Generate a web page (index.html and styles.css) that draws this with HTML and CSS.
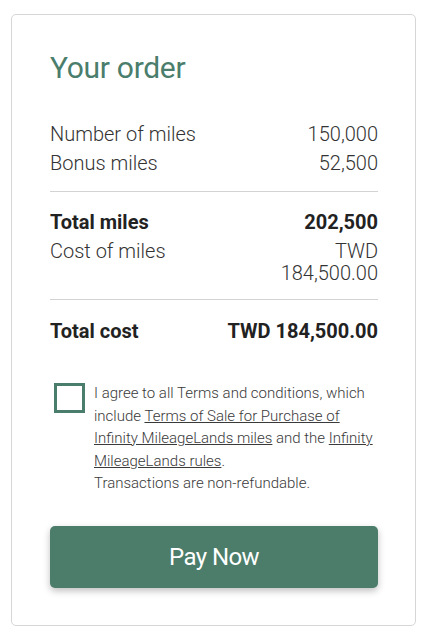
FILE: index.html
```html
<!DOCTYPE html>
<html lang="en">
<head>
    <meta charset="UTF-8">
    <meta name="viewport" content="width=device-width, initial-scale=1.0">
    <title>Your order</title>
    <link rel="stylesheet" href="styles.css">
</head>
<body>
    <div class="card">
        <h1 class="title">Your order</h1>

        <div class="group first">
            <div class="row">
                <span class="label">Number of miles</span>
                <span class="value">150,000</span>
            </div>
            <div class="row">
                <span class="label">Bonus miles</span>
                <span class="value">52,500</span>
            </div>
        </div>

        <div class="group second">
            <div class="row total">
                <span class="label">Total miles</span>
                <span class="value">202,500</span>
            </div>
            <div class="row">
                <span class="label">Cost of miles</span>
                <span class="value narrow">TWD 184,500.00</span>
            </div>
        </div>

        <div class="group last">
            <div class="row total">
                <span class="label">Total cost</span>
                <span class="value">TWD 184,500.00</span>
            </div>
        </div>

        <label class="agree">
            <input type="checkbox" class="check">
            <span class="box"></span>
            <span class="agree-text">
                I agree to all Terms and conditions, which include
                <a href="#">Terms of Sale for Purchase of Infinity MileageLands miles</a>
                and the <a href="#">Infinity MileageLands rules</a>.<br>
                Transactions are non-refundable.
            </span>
        </label>

        <button class="pay">Pay Now</button>
    </div>
</body>
</html>
```

FILE: styles.css
```css
body {
    font-family: Roboto, "Liberation Sans", Arial, sans-serif;
    margin: 0;
    padding: 14px 12px 10px 11px;
    background: #fff;
    color: #333;
}
.card {
    border: 1px solid #d6d6d6;
    border-radius: 5px;
    padding: 33px 37px 37px 38px;
}
.title {
    font-size: 30px;
    font-weight: 400;
    line-height: 40px;
    letter-spacing: -0.3px;
    color: #4a7d6b;
    margin: 0 0 35px;
}
.group {
    border-bottom: 1px solid #d3d3d3;
}
.group.first {
    padding-bottom: 17px;
}
.group.second {
    padding-top: 19px;
    padding-bottom: 15px;
}
.group.last {
    border-bottom: none;
    padding-top: 20px;
}
.row {
    display: flex;
    justify-content: space-between;
    font-size: 20px;
    font-weight: 300;
    line-height: 22px;
    margin-bottom: 7px;
}
.row:last-child {
    margin-bottom: 0;
}
.value {
    text-align: right;
}
.value.narrow {
    max-width: 40%;
}
.row.total {
    font-weight: 700;
    color: #222;
}
.agree {
    display: flex;
    align-items: flex-start;
    margin-top: 40px;
    cursor: pointer;
}
.check {
    display: none;
}
.box {
    flex: none;
    width: 25px;
    height: 24px;
    border: 3px solid #4a7d6b;
    margin: 1px 9px 0 4px;
}
.agree-text {
    font-size: 15px;
    font-weight: 300;
    line-height: 22.5px;
    color: #3a3a3a;
}
.agree-text a {
    color: inherit;
    text-decoration: underline;
}
.pay {
    display: block;
    width: 100%;
    height: 62px;
    margin-top: 31px;
    background: #4b7d6a;
    color: #fff;
    border: none;
    border-radius: 5px;
    font-family: Roboto, "Liberation Sans", Arial, sans-serif;
    font-size: 24px;
    font-weight: 400;
    letter-spacing: -0.6px;
    box-shadow: 0 3px 7px rgba(0, 0, 0, 0.25);
    cursor: pointer;
}
```
